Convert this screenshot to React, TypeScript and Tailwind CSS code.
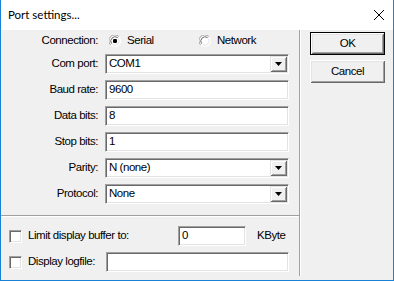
import React from "react";

const sunken =
  "border border-t-[#a0a0a0] border-l-[#a0a0a0] border-b-white border-r-white bg-white shadow-[inset_1px_1px_0_#696969,inset_-1px_-1px_0_#e3e3e3]";

function Radio({ checked }: { checked?: boolean }) {
  return (
    <svg width="12" height="12" viewBox="0 0 12 12" className="shrink-0">
      <circle cx="6" cy="6" r="5.5" fill="#fff" stroke="#ffffff" />
      <path d="M1.6 9.9 A5.5 5.5 0 0 1 9.9 1.6" fill="none" stroke="#a0a0a0" />
      <path d="M2.6 8.6 A4.3 4.3 0 0 1 8.6 2.6" fill="none" stroke="#696969" />
      <path d="M9.4 3.4 A4.3 4.3 0 0 1 3.4 9.4" fill="none" stroke="#e3e3e3" />
      {checked && <rect x="4" y="4" width="4" height="4" rx="1.2" fill="#000" />}
    </svg>
  );
}

function Checkbox() {
  return <div className={`h-[13px] w-[13px] shrink-0 ${sunken}`} />;
}

function TextField({ value, className = "" }: { value?: string; className?: string }) {
  return (
    <div className={`flex h-[20px] items-center pl-[3px] ${sunken} ${className}`}>
      {value}
    </div>
  );
}

function Combo({ value }: { value: string }) {
  return (
    <div className={`flex h-[20px] w-[184px] items-center justify-between p-[1px] pl-[3px] ${sunken}`}>
      <span>{value}</span>
      <div className="flex h-full w-[17px] items-center justify-center bg-[#f0f0f0] shadow-[inset_1px_1px_0_#e3e3e3,inset_-1px_-1px_0_#696969,inset_2px_2px_0_#fff,inset_-2px_-2px_0_#a0a0a0]">
        <svg width="7" height="4" viewBox="0 0 7 4">
          <polygon points="0,0 7,0 3.5,4" fill="#000" />
        </svg>
      </div>
    </div>
  );
}

function Row({ label, children }: { label: string; children: React.ReactNode }) {
  return (
    <div className="flex h-[20px] items-center gap-[7px]">
      <div className="w-[97px] text-right">{label}</div>
      {children}
    </div>
  );
}

function Button({ label, isDefault }: { label: string; isDefault?: boolean }) {
  return (
    <div
      className={`flex h-[23px] w-[75px] items-center justify-center bg-[#f0f0f0] ${
        isDefault
          ? "border border-black shadow-[inset_1px_1px_0_#fff,inset_-1px_-1px_0_#696969,inset_2px_2px_0_#e3e3e3,inset_-2px_-2px_0_#a0a0a0]"
          : "shadow-[inset_1px_1px_0_#fff,inset_-1px_-1px_0_#696969,inset_2px_2px_0_#e3e3e3,inset_-2px_-2px_0_#a0a0a0]"
      }`}
    >
      {label}
    </div>
  );
}

export default function App() {
  return (
    <div className="flex h-[281px] w-[394px] flex-col whitespace-nowrap border-x border-b border-[#1a82d6] bg-[#f0f0f0] font-['Liberation_Sans',Arial,sans-serif] text-[11.5px] leading-none tracking-[-0.45px] text-black">
      <div className="flex h-[30px] shrink-0 items-center justify-between bg-white pl-[7px] pr-[9px] font-['Lato',sans-serif] text-[11.5px] tracking-normal">
        <span>Port settings...</span>
        <svg width="10" height="10" viewBox="0 0 10 10">
          <path d="M0 0 L10 10 M10 0 L0 10" stroke="#000" strokeWidth="1" />
        </svg>
      </div>

      <div className="flex min-h-0 flex-1">
        <div className="flex w-[298px] flex-col">
          <div className="flex flex-col gap-[6px] pt-[1px]">
            <div className="mb-[-3px] flex h-[20px] items-center gap-[7px]">
              <div className="w-[97px] text-right">Connection:</div>
              <div className="flex items-center pl-[4px]">
                <div className="flex w-[90px] items-center gap-[6px]">
                  <Radio checked />
                  <span>Serial</span>
                </div>
                <div className="flex items-center gap-[6px]">
                  <Radio />
                  <span>Network</span>
                </div>
              </div>
            </div>
            <Row label="Com port:">
              <Combo value="COM1" />
            </Row>
            <Row label="Baud rate:">
              <TextField value="9600" className="w-[184px]" />
            </Row>
            <Row label="Data bits:">
              <TextField value="8" className="w-[184px]" />
            </Row>
            <Row label="Stop bits:">
              <TextField value="1" className="w-[184px]" />
            </Row>
            <Row label="Parity:">
              <Combo value="N (none)" />
            </Row>
            <Row label="Protocol:">
              <Combo value="None" />
            </Row>
          </div>

          <div className="mt-[11px] h-[2px] border-t border-b border-t-[#a0a0a0] border-b-white" />

          <div className="flex flex-col gap-[6px] pl-[8px] pt-[9px]">
            <div className="flex h-[20px] items-center">
              <Checkbox />
              <span className="ml-[6px] w-[150px]">Limit display buffer to:</span>
              <TextField value="0" className="h-[19px] w-[68px]" />
              <span className="ml-[11px]">KByte</span>
            </div>
            <div className="flex h-[20px] items-center">
              <Checkbox />
              <span className="ml-[6px] w-[78px]">Display logfile:</span>
              <TextField className="w-[183px]" />
            </div>
          </div>
        </div>

        <div className="mb-[4px] w-[2px] border-l border-r border-l-[#a0a0a0] border-r-white" />

        <div className="flex flex-col gap-[5px] pl-[9px] pt-[2px]">
          <Button label="OK" isDefault />
          <Button label="Cancel" />
        </div>
      </div>
    </div>
  );
}
